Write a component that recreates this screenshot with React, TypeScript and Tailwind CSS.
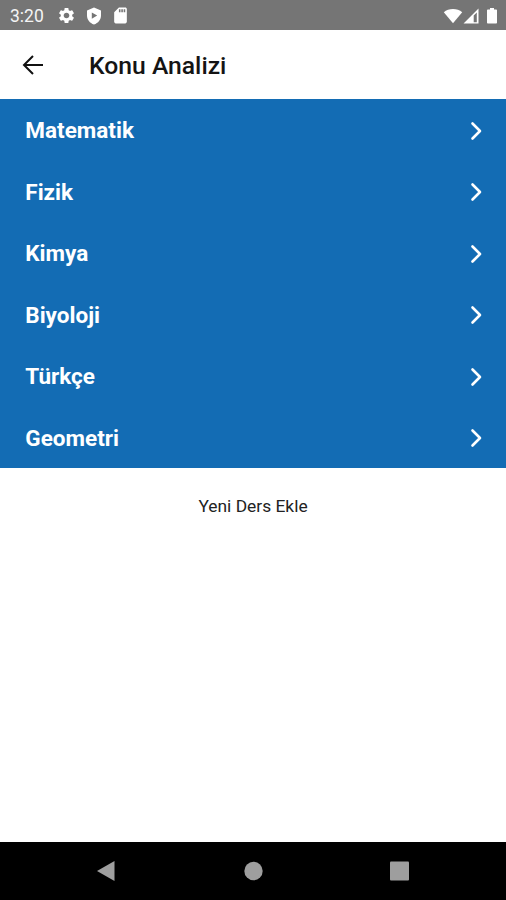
import { MdSettings, MdSdCard } from 'react-icons/md';

const lessons = ['Matematik', 'Fizik', 'Kimya', 'Biyoloji', 'Türkçe', 'Geometri'];

function ShieldIcon() {
  return (
    <svg viewBox="0 0 16 18" className="ml-[10px] h-[18px] w-4" fill="white">
      <path
        fillRule="evenodd"
        d="M8 0.5 15 3.4V8.5C15 12.8 12.2 16.1 8 17.5 3.8 16.1 1 12.8 1 8.5V3.4ZM5.8 5.4V11.8L11.2 8.6Z"
      />
    </svg>
  );
}

function StatusBar() {
  return (
    <div className="flex h-[30px] items-center bg-[#757575] pt-px pl-[10px] pr-2 text-white">
      <span className="w-[46.5px] text-[17.5px] leading-5 text-[#f4f4f4]">3:20</span>
      <MdSettings className="size-[19px]" />
      <ShieldIcon />
      <MdSdCard className="ml-[9.5px] size-[19px]" />
      <div className="ml-auto flex items-center">
        <svg viewBox="0 0 20 16" className="h-4 w-5" fill="white">
          <path d="M10 15.2 0.8 4.2C3.3 2.1 6.5 1 10 1s6.7 1.1 9.2 3.2Z" />
        </svg>
        <svg viewBox="0 0 16 16" className="h-4 w-4" fill="white">
          <path fillRule="evenodd" d="M0.5 15.5 15.5 0.5V15.5ZM10.7 7.6V14.2H13.8V4.5Z" />
        </svg>
        <svg viewBox="0 0 12 18" className="ml-[7px] h-[18px] w-3" fill="white">
          <path d="M4 1h4v1.500h2.200c.5 0 .8.3.8.8v12.400c0 .5-.3.8-.8.8H1.800c-.5 0-.8-.3-.8-.8V3.300c0-.5.3-.8.8-.8H4Z" />
        </svg>
      </div>
    </div>
  );
}

function Header() {
  return (
    <header className="flex h-[69px] items-center bg-white pl-[22px]">
      <svg viewBox="0 0 22 22" className="h-[22px] w-[22px]" fill="none" stroke="#111111" strokeWidth="2">
        <path d="M21 11H2.5M11 2 2 11l9 9" />
      </svg>
      <h1 className="ml-[45px] mt-[3px] text-[24.7px] leading-8 font-medium text-[#141414]">Konu Analizi</h1>
    </header>
  );
}

function LessonRow({ name }: { name: string }) {
  return (
    <li className="flex h-[61.5px] items-center justify-between pl-[25.3px] pr-[23px]">
      <span className="mt-px text-[22.5px] leading-7 font-bold text-white">{name}</span>
      <svg
        viewBox="0 0 14 20"
        className="mt-[2px] h-5 w-[14px]"
        fill="none"
        stroke="white"
        strokeWidth="2.6"
        strokeLinecap="round"
        strokeLinejoin="round"
      >
        <path d="M3.500 2.500 11 10l-7.500 7.500" />
      </svg>
    </li>
  );
}

function NavigationBar() {
  return (
    <div className="h-[58px] bg-black">
      <svg viewBox="0 0 506 58" className="h-[58px] w-full" fill="#9e9e9e">
        <path d="M97 29 114.5 19V39Z" />
        <circle cx="253.5" cy="29" r="9.2" />
        <rect x="390" y="19.5" width="19" height="19" rx="1" />
      </svg>
    </div>
  );
}

export default function App() {
  return (
    <div className="flex h-screen w-full flex-col bg-white font-['Roboto',sans-serif]">
      <StatusBar />
      <Header />
      <ul className="bg-[#136cb4]">
        {lessons.map((name) => (
          <LessonRow key={name} name={name} />
        ))}
      </ul>
      <button className="mx-auto mt-[26px] text-[17.4px] leading-6 text-[#222222]">Yeni Ders Ekle</button>
      <div className="mt-auto">
        <NavigationBar />
      </div>
    </div>
  );
}
